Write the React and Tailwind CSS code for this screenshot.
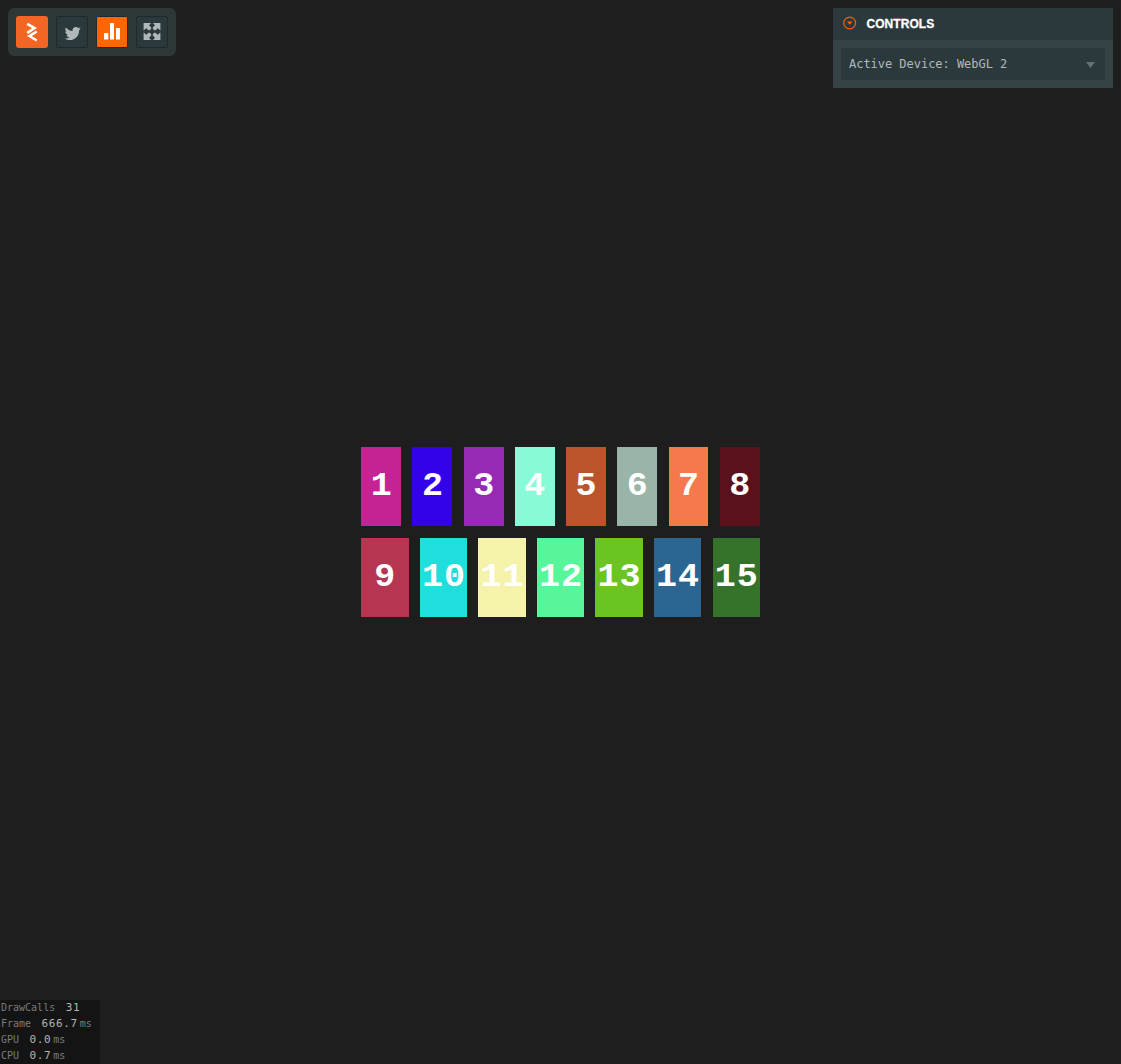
const rowOne = [
  { n: 1, bg: 'bg-[#c52293]' },
  { n: 2, bg: 'bg-[#3402e8]' },
  { n: 3, bg: 'bg-[#962ab5]' },
  { n: 4, bg: 'bg-[#89fad8]' },
  { n: 5, bg: 'bg-[#bb542b]' },
  { n: 6, bg: 'bg-[#98b5a7]' },
  { n: 7, bg: 'bg-[#f6794e]' },
  { n: 8, bg: 'bg-[#5a111c]' },
];

const rowTwo = [
  { n: 9, bg: 'bg-[#b63551]' },
  { n: 10, bg: 'bg-[#20dedc]' },
  { n: 11, bg: 'bg-[#f5f2a9]' },
  { n: 12, bg: 'bg-[#57f69a]' },
  { n: 13, bg: 'bg-[#6cc422]' },
  { n: 14, bg: 'bg-[#2b6692]' },
  { n: 15, bg: 'bg-[#35722a]' },
];

const stats = [
  { label: 'DrawCalls', value: '31', unit: '' },
  { label: 'Frame', value: '666.7', unit: 'ms' },
  { label: 'GPU', value: '0.0', unit: 'ms' },
  { label: 'CPU', value: '0.7', unit: 'ms' },
];

function TileRow({ tiles }) {
  return (
    <div className="flex gap-[11.3px]">
      {tiles.map((t) => (
        <div key={t.n} className={`flex h-[79.6px] min-w-0 flex-1 items-center justify-center ${t.bg}`}>
          <span className="mt-[2px] -mr-[1px] scale-y-[0.94] font-['Liberation_Mono',monospace] text-[35px] leading-none font-bold tracking-[1px] text-white">
            {t.n}
          </span>
        </div>
      ))}
    </div>
  );
}

function Toolbar() {
  const button = 'flex size-8 items-center justify-center rounded-[2px] border border-[#20292b] bg-[#2c393c]';
  return (
    <div className="flex h-12 w-[168px] gap-2 rounded-md bg-[#2f3838] p-2">
      <div className="flex size-8 items-center justify-center rounded-[3px] bg-[#f26522]">
        <svg width="32" height="32" viewBox="0 0 32 32" fill="none" stroke="#fff" strokeWidth="2.5">
          <path d="M11.2 7.8L18.6 12.1L11.2 16.9" />
          <path d="M20.8 15.5L13.4 20.1L20.8 24.5" />
        </svg>
      </div>
      <div className={button}>
        <svg className="mt-[2px] shrink-0" width="17" height="17" viewBox="0 0 24 24" fill="#b1b8ba">
          <path d="M23.643 4.937c-.835.37-1.732.62-2.675.733.962-.576 1.7-1.49 2.048-2.578-.9.534-1.897.922-2.958 1.13-.85-.904-2.06-1.47-3.4-1.47-2.572 0-4.658 2.086-4.658 4.66 0 .364.042.718.12 1.06-3.873-.195-7.304-2.05-9.602-4.868-.4.69-.63 1.49-.63 2.342 0 1.616.823 3.043 2.072 3.878-.764-.025-1.482-.234-2.11-.583v.06c0 2.257 1.605 4.14 3.737 4.568-.392.106-.803.162-1.227.162-.3 0-.593-.028-.877-.082.593 1.85 2.313 3.198 4.352 3.234-1.595 1.25-3.604 1.995-5.786 1.995-.376 0-.747-.022-1.112-.065 2.062 1.323 4.51 2.093 7.14 2.093 8.57 0 13.255-7.098 13.255-13.254 0-.2-.005-.402-.014-.602.91-.658 1.7-1.477 2.323-2.41z" />
        </svg>
      </div>
      <div className="flex size-8 items-center justify-center rounded-[2px] border border-[#20292b] bg-[#ff6600]">
        <svg width="30" height="30" viewBox="0 0 30 30" fill="#fff">
          <rect x="7" y="16" width="4.3" height="6.6" rx=".6" />
          <rect x="13" y="6" width="4" height="16.6" rx=".6" />
          <rect x="19" y="11" width="4" height="11.6" rx=".6" />
        </svg>
      </div>
      <div className={button}>
        <svg width="30" height="30" viewBox="0 0 30 30" fill="#b1b8ba">
          <path d="M6.6 6H14L12 8.2L14.2 10.4V11.8L12.7 13.3H11.5L9.3 11.2L6.6 13.4Z" />
          <path d="M23.4 6H16L18 8.2L15.8 10.4V11.8L17.3 13.3H18.5L20.7 11.2L23.4 13.4Z" />
          <path d="M6.6 23H14L12 20.8L14.2 18.6V17.2L12.7 15.7H11.5L9.3 17.8L6.6 15.6Z" />
          <path d="M23.4 23H16L18 20.8L15.8 18.6V17.2L17.3 15.7H18.5L20.7 17.8L23.4 15.6Z" />
        </svg>
      </div>
    </div>
  );
}

function Controls() {
  return (
    <div className="h-20 w-[280px] bg-[#364346]">
      <div className="flex h-8 items-center bg-[#2c393c] pl-[10px]">
        <svg className="-mt-[2px]" width="14" height="14" viewBox="0 0 14 14">
          <circle cx="6.7" cy="7" r="5.9" fill="none" stroke="#f26406" strokeWidth="1.2" />
          <path d="M4 5.5H9.4L6.7 8.7Z" fill="#f26406" />
        </svg>
        <span className="-mt-px ml-[9.5px] font-['Liberation_Sans',sans-serif] text-[12px] leading-4 font-bold tracking-[0.05px] text-white [-webkit-text-stroke:0.3px_white]">
          CONTROLS
        </span>
      </div>
      <div className="p-2">
        <div className="flex h-8 items-center justify-between bg-[#2c393c] pr-[10px] pl-2">
          <span className="font-['DejaVu_Sans_Mono',monospace] text-[12px] leading-4 tracking-[-0.03px] text-[#b1b8ba]">Active Device: WebGL 2</span>
          <svg className="mt-[2px]" width="9" height="6" viewBox="0 0 9 6">
            <path d="M0 0H9L4.5 6Z" fill="#5f7377" />
          </svg>
        </div>
      </div>
    </div>
  );
}

export default function App() {
  return (
    <div className="flex h-[1064px] w-[1121px] flex-col justify-between overflow-hidden bg-[#1e1e1e]">
      <header className="flex h-[88px] items-start justify-between px-2 pt-2">
        <Toolbar />
        <Controls />
      </header>
      <main className="mx-auto mb-[24px] flex w-[398.5px] flex-col gap-[11.5px]">
        <TileRow tiles={rowOne} />
        <TileRow tiles={rowTwo} />
      </main>
      <footer className="w-[100px] bg-[#141414] font-['DejaVu_Sans_Mono',monospace]">
        {stats.map((s) => (
          <div key={s.label} className="flex h-4 items-center pl-px leading-4 whitespace-nowrap">
            <span className="text-[10px] text-[#7b7b7b]">{s.label}</span>
            <span className="-mt-px ml-[10.5px] text-[11px] tracking-[0.6px] text-[#b5b5b5]">{s.value}</span>
            <span className="ml-[2px] text-[10px] text-[#7b7b7b]">{s.unit}</span>
          </div>
        ))}
      </footer>
    </div>
  );
}
